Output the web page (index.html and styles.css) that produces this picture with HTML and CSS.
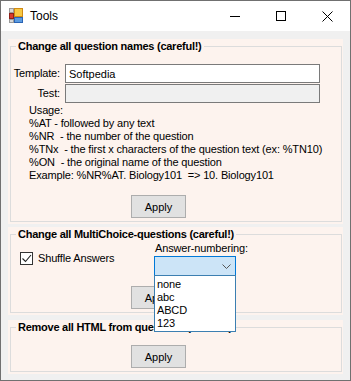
FILE: index.html
```html
<!DOCTYPE html>
<html lang="en">
<head>
    <meta charset="UTF-8">
    <title>Tools</title>
    <link rel="stylesheet" href="styles.css">
</head>
<body>
    <div class="window">
        <div class="titlebar">
            <svg class="app-icon" width="15" height="15" viewBox="0 0 15 15">
                <rect x="0.5" y="0.5" width="4" height="4" fill="#d8d8d8" stroke="#9a9a9a"/>
                <rect x="0.5" y="5.5" width="4" height="5" fill="#d83a2e" stroke="#8e1f18"/>
                <rect x="0.5" y="11.5" width="4" height="3" fill="#d8d8d8" stroke="#9a9a9a"/>
                <rect x="5.5" y="0.5" width="8" height="8" fill="#f7c843" stroke="#d08a14"/>
                <rect x="5.5" y="9.5" width="8" height="5" fill="#5b9be0" stroke="#2b64b4"/>
            </svg>
            <span class="title">Tools</span>
            <div class="controls">
                <span class="ctl">
                    <svg width="10" height="10" viewBox="0 0 10 10"><path d="M0 5.5h10" stroke="#000" stroke-width="1"/></svg>
                </span>
                <span class="ctl">
                    <svg width="10" height="10" viewBox="0 0 10 10"><rect x="0.5" y="0.5" width="9" height="9" fill="none" stroke="#000"/></svg>
                </span>
                <span class="ctl">
                    <svg width="11" height="11" viewBox="0 0 11 11"><path d="M0.5 0.5l10 10M10.5 0.5l-10 10" stroke="#000" stroke-width="1"/></svg>
                </span>
            </div>
        </div>

        <div class="client">
            <div class="panel">
                <fieldset class="group">
                    <legend>Change all question names (careful!)</legend>
                    <div class="field first">
                        <label>Template:</label>
                        <input type="text" value="Softpedia">
                    </div>
                    <div class="field">
                        <label>Test:</label>
                        <input type="text" class="readonly" readonly>
                    </div>
                    <div class="usage">
                        <div>Usage:</div>
                        <div>%AT - followed by any text</div>
                        <div>%NR  - the number of the question</div>
                        <div>%TNx  - the first x characters of the question text (ex: %TN10)</div>
                        <div>%ON  - the original name of the question</div>
                        <div>Example: %NR%AT. Biology101  =&gt; 10. Biology101</div>
                    </div>
                    <button class="apply apply-names">Apply</button>
                </fieldset>
            </div>

            <div class="panel mc">
                <fieldset class="group">
                    <legend>Change all MultiChoice-questions (careful!)</legend>
                    <div class="mc-row">
                        <div class="shuffle">
                            <span class="checkbox">
                                <svg width="11" height="11" viewBox="0 0 11 11"><path d="M1.5 5.5l3 3 5.5-6.5" fill="none" stroke="#222" stroke-width="1.1"/></svg>
                            </span>
                            <span>Shuffle Answers</span>
                        </div>
                        <div class="numbering">
                            <div class="num-label">Answer-numbering:</div>
                            <div class="combo-wrap">
                                <div class="combo">
                                    <svg width="9" height="5" viewBox="0 0 9 5"><path d="M0.5 0.5l4 4 4-4" fill="none" stroke="#555" stroke-width="1"/></svg>
                                </div>
                                <ul class="dropdown">
                                    <li>none</li>
                                    <li>abc</li>
                                    <li>ABCD</li>
                                    <li>123</li>
                                </ul>
                            </div>
                        </div>
                    </div>
                    <button class="apply apply-mc">Apply</button>
                </fieldset>
            </div>

            <div class="panel html">
                <fieldset class="group">
                    <legend>Remove all HTML from questions (careful!)</legend>
                    <button class="apply apply-html">Apply</button>
                </fieldset>
            </div>
        </div>
    </div>
</body>
</html>
```

FILE: styles.css
```css
* {
    box-sizing: border-box;
}
body {
    margin: 0;
    font-family: 'Liberation Sans', Arial, sans-serif;
    font-size: 11px;
    letter-spacing: -0.15px;
    color: #000;
    background: #f0f0f0;
}
.window {
    width: 351px;
    height: 381px;
    border: 1px solid #707070;
    background: #f0f0f0;
    display: flex;
    flex-direction: column;
    overflow: hidden;
}
.titlebar {
    height: 30px;
    background: #fff;
    display: flex;
    align-items: center;
    flex-shrink: 0;
}
.app-icon {
    margin-left: 8px;
    margin-top: -2px;
}
.title {
    margin-left: 6px;
    font-size: 12px;
    letter-spacing: 0;
    margin-top: -1px;
}
.controls {
    margin-left: auto;
    display: flex;
    height: 100%;
}
.ctl {
    width: 46px;
    height: 100%;
    display: flex;
    align-items: center;
    justify-content: center;
}
.client {
    padding: 8px 7px 0 7px;
}
.panel {
    background: #fdf3ee;
    padding: 0 1px 2px 2px;
}
.panel.mc {
    margin-top: 3px;
}
.panel.html {
    margin-top: 5px;
}
.group {
    margin: 0;
    padding: 0 0 3px 0;
    border: 1px solid #dcdcdc;
    min-width: 0;
}
.group legend {
    margin-left: 5px;
    padding: 0 2px;
    font-weight: bold;
    font-size: 11px;
    letter-spacing: -0.25px;
    line-height: 14px;
}
.field {
    display: flex;
    align-items: flex-start;
    margin-top: 1px;
}
.field.first {
    margin-top: 11px;
}
.field label {
    width: 49px;
    text-align: right;
    line-height: 13px;
    padding-top: 3px;
}
.field input {
    margin-left: 5px;
    width: 255px;
    height: 19px;
    border: 1px solid #7a7a7a;
    padding: 0 3px;
    font: inherit;
    background: #fff;
    outline: none;
}
.field input.readonly {
    background: #f0f0f0;
}
.usage {
    padding-left: 18px;
    margin-top: 1px;
    line-height: 13px;
}
.usage div {
    white-space: pre;
}
.apply {
    display: block;
    width: 55px;
    height: 23px;
    background: #e1e1e1;
    border: 1px solid #adadad;
    font: inherit;
    padding: 0;
    color: #000;
}
.apply-names {
    margin: 13px 0 0 120px;
}
.mc-row {
    display: flex;
    align-items: flex-start;
}
.shuffle {
    width: 134px;
    margin-left: 9px;
    margin-top: 11px;
    display: flex;
    align-items: center;
    gap: 5px;
    line-height: 13px;
}
.checkbox {
    width: 13px;
    height: 13px;
    border: 1px solid #333;
    background: #fff;
    display: flex;
    align-items: center;
    justify-content: center;
}
.numbering {
    margin-top: 1px;
}
.num-label {
    padding-left: 1px;
    line-height: 13px;
}
.combo-wrap {
    position: relative;
    margin-top: 1px;
}
.combo {
    width: 82px;
    height: 20px;
    background: #cce4f7;
    border: 1px solid #0078d7;
    display: flex;
    align-items: center;
    justify-content: flex-end;
    padding-right: 4px;
}
.dropdown {
    position: absolute;
    left: 0;
    top: 19px;
    width: 82px;
    margin: 0;
    padding: 2px 0 1px 0;
    list-style: none;
    background: #fff;
    border: 1px solid #3c7fb1;
    z-index: 2;
}
.dropdown li {
    line-height: 13px;
    padding-left: 2px;
}
.apply-mc {
    margin: 10px 0 0 120px;
}
.apply-html {
    margin: 11px 0 0 120px;
}
```
